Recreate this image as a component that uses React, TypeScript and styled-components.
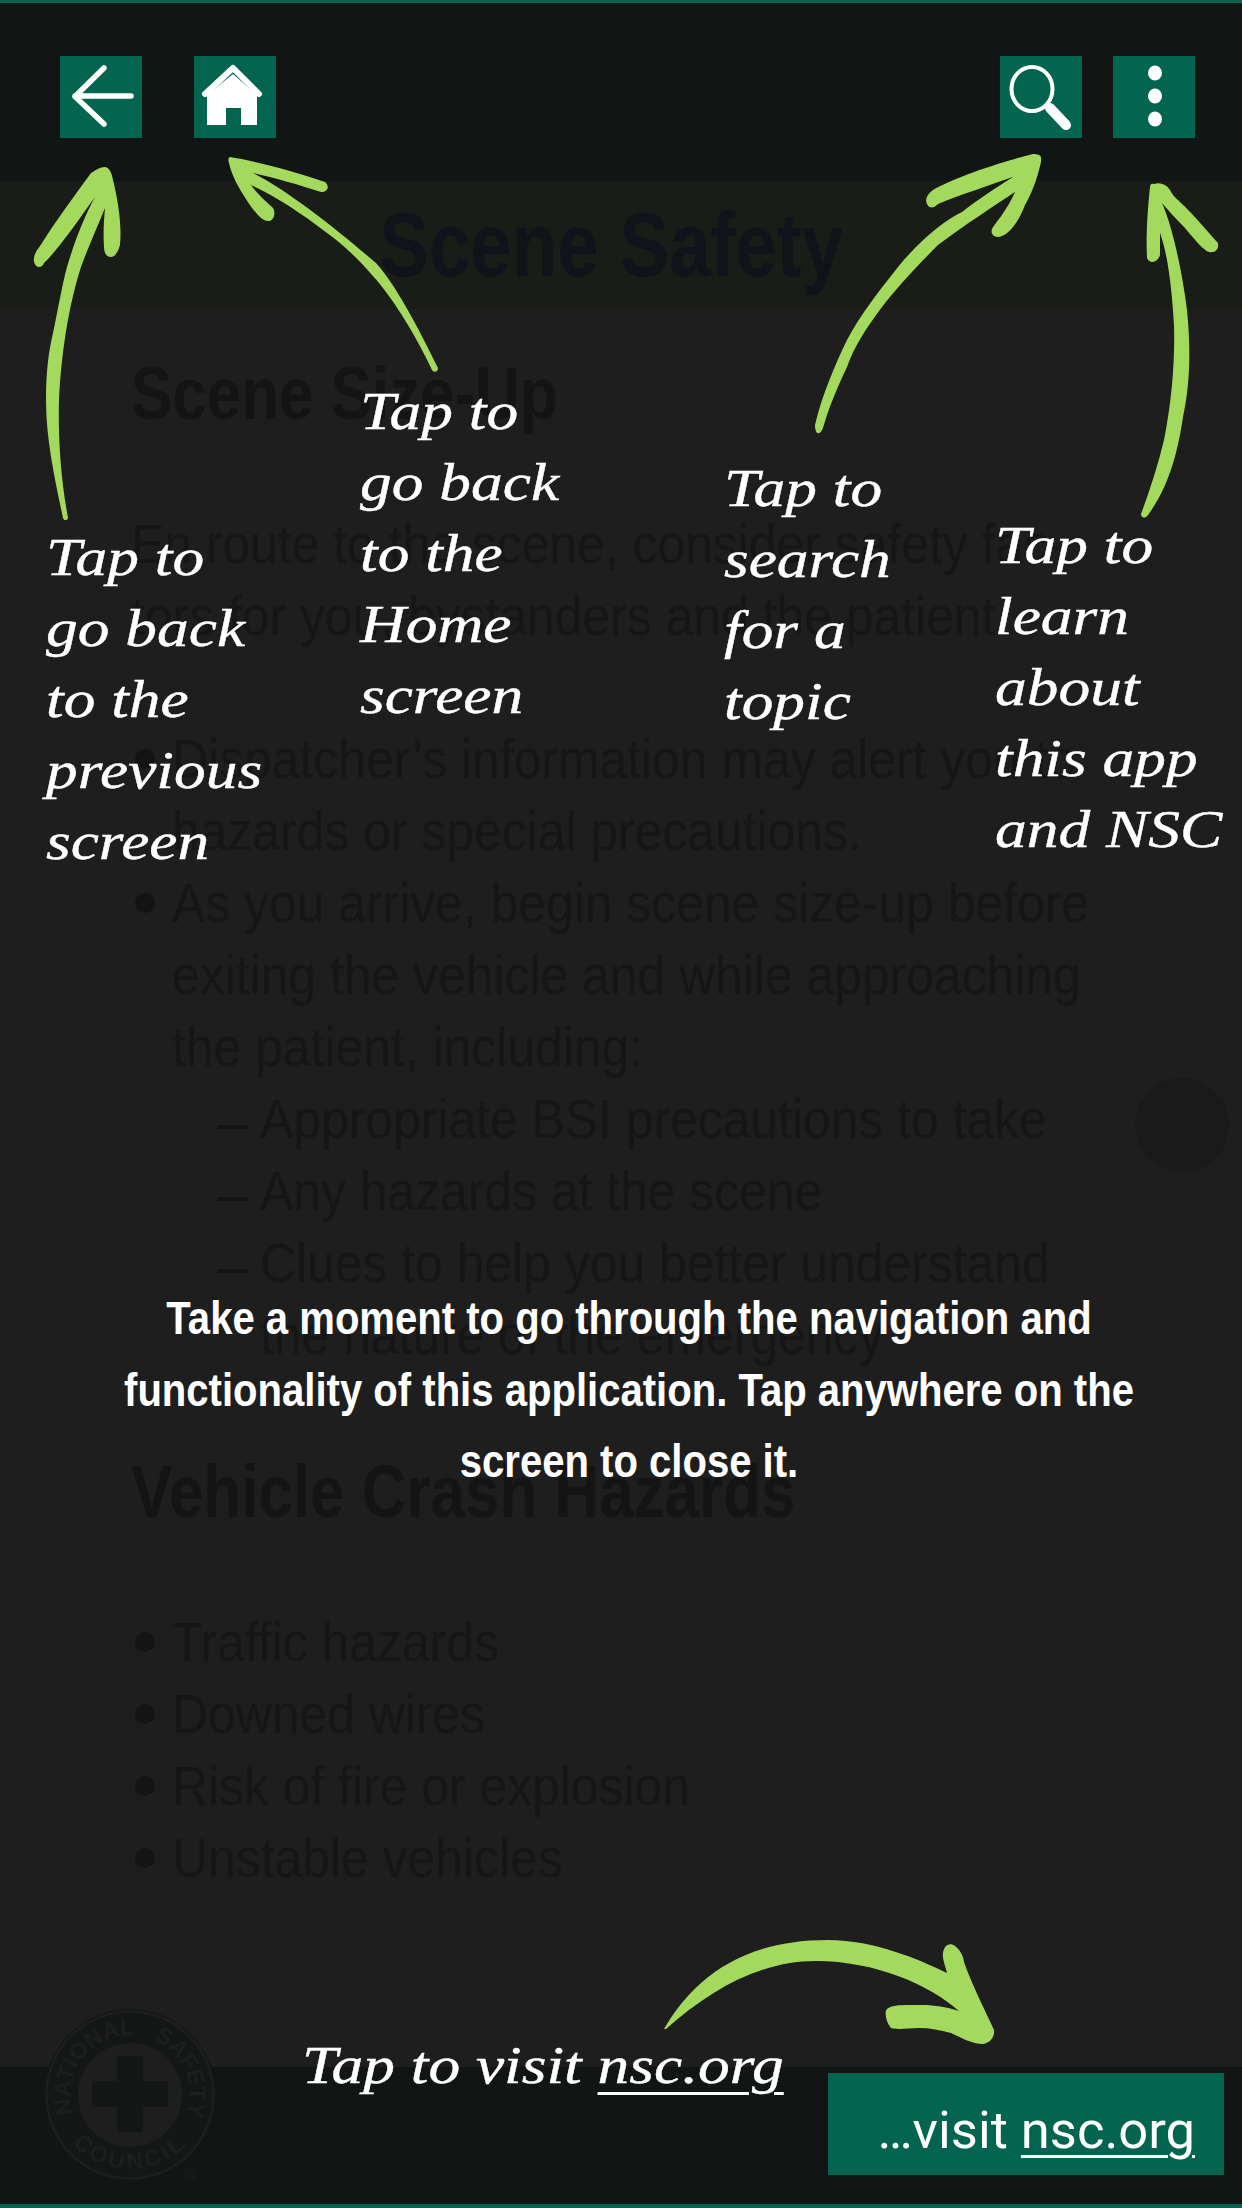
import React from 'react';
import styled, { createGlobalStyle } from 'styled-components';

const Global = createGlobalStyle`
  *, *::before, *::after { box-sizing: border-box; }
  html, body { margin: 0; padding: 0; background: #1e1e1e; }
  body { font-family: "Liberation Sans", Arial, sans-serif; }
`;

const Page = styled.div`
  position: relative;
  width: 1242px;
  height: 2208px;
  overflow: hidden;
  display: flex;
  flex-direction: column;
  background: #1e1e1e;
`;

const TopBar = styled.header`
  height: 181px;
  border-top: 3px solid #03654f;
  background: #111514;
  display: flex;
  justify-content: space-between;
  align-items: flex-start;
  padding: 53px 47px 0 60px;
`;

const NavGroup = styled.div`
  display: flex;
  gap: ${p => p.$gap}px;
`;

const IconButton = styled.button`
  width: 82px;
  height: 82px;
  padding: 0;
  border: 0;
  background: #03654f;
  display: block;
`;

const TitleBand = styled.div`
  height: 128px;
  background: #1a1c17;
  display: flex;
  justify-content: center;
  align-items: center;
  padding-right: 20px;
`;

const Title = styled.h1`
  margin: 0;
  color: #11131b;
  font: 700 90px/128px "Liberation Sans", Arial, sans-serif;
  white-space: nowrap;
  transform: scaleX(0.828);
`;

const Content = styled.main`
  flex: 1;
  padding: 40px 0 0 131px;
  color: #161616;
`;

const Heading = styled.h2`
  margin: ${p => p.$mt || 0}px 0 0;
  color: #141414;
  font: 700 74px/90px "Liberation Sans", Arial, sans-serif;
  white-space: nowrap;
  transform: scaleX(0.837);
  transform-origin: left;
`;

const Para = styled.p`
  margin: ${p => p.$mt || 0}px 0 0;
`;

const Line = styled.div`
  font-size: 56px;
  line-height: 72px;
  height: 72px;
  white-space: nowrap;
  transform: scaleX(0.89);
  transform-origin: left;
`;

const List = styled.ul`
  margin: ${p => p.$mt || 0}px 0 0;
  padding: 0;
  list-style: none;
`;

const Item = styled.li`
  position: relative;
  padding-left: 41px;
  &::before {
    content: '';
    position: absolute;
    left: 4px;
    top: 26px;
    width: 20px;
    height: 20px;
    border-radius: 50%;
    background: #141414;
  }
`;

const SubItem = styled.div`
  position: relative;
  padding-left: 88px;
  &::before {
    content: '';
    position: absolute;
    left: 46px;
    top: 42px;
    width: 30px;
    height: 4px;
    background: #141414;
  }
`;

const Footer = styled.footer`
  height: 141px;
  background: #111514;
  border-bottom: 4px solid #03654f;
  display: flex;
  justify-content: flex-end;
  align-items: flex-start;
  padding: 6px 18px 0 0;
`;

const VisitButton = styled.a`
  width: 396px;
  height: 102px;
  background: #03654f;
  color: #fff;
  font: 400 52.5px/114px Roboto, sans-serif;
  display: flex;
  justify-content: flex-end;
  padding-right: 29px;
  white-space: pre;
  u { text-underline-offset: 7px; text-decoration-thickness: 3px; }
`;

const FloatCircle = styled.div`
  position: absolute;
  left: 1135px;
  top: 1078px;
  width: 94px;
  height: 94px;
  border-radius: 50%;
  background: #1a1a1a;
`;

const Seal = styled.svg`
  position: absolute;
  left: 40px;
  top: 2005px;
`;

const SealText = styled.text`
  font-family: "Liberation Sans", Arial, sans-serif;
  font-weight: 700;
  font-size: 23px;
  fill: #1e1e1e;
`;

const Arrows = styled.svg`
  position: absolute;
  left: 0;
  top: 0;
  pointer-events: none;
`;

const Hand = styled.div`
  position: absolute;
  left: ${p => p.$x}px;
  top: ${p => p.$y}px;
  color: #fff;
  font: italic 400 52px/71px "Liberation Serif", "Times New Roman", serif;
  white-space: nowrap;
  transform: scaleX(1.22);
  transform-origin: left;
  -webkit-text-stroke: 0.4px #fff;
  u { text-underline-offset: 9px; text-decoration-thickness: 3px; }
`;

const Message = styled.div`
  position: absolute;
  left: 0;
  right: 0;
  top: 1283px;
  padding-left: 16px;
  text-align: center;
  color: #fff;
`;

const MessageLine = styled.div`
  font: 700 46px/71.5px "Liberation Sans", Arial, sans-serif;
  white-space: nowrap;
  transform: scaleX(0.871);
`;

const hand = (lines: string[]) => lines.map(l => <div key={l}>{l}</div>);

const ARROW = '#a3d95c';

export default function App() {
  return (
    <Page>
      <Global />
      <TopBar>
        <NavGroup $gap={52}>
          <IconButton aria-label="Back">
            <svg width="82" height="82" viewBox="0 0 82 82">
              <path d="M44 12 L15 40.5 L44 68 M15 40 H71" fill="none" stroke="#fff" strokeWidth="5.5" strokeLinecap="round" strokeLinejoin="round" />
            </svg>
          </IconButton>
          <IconButton aria-label="Home">
            <svg width="82" height="82" viewBox="0 0 82 82">
              <path d="M11 38 L39 12 L65 38" fill="none" stroke="#fff" strokeWidth="6" strokeLinecap="round" strokeLinejoin="round" />
              <path d="M13 39 L39 18 L63 39 V69 H47 V52 H32 V69 H13 Z" fill="#fff" />
            </svg>
          </IconButton>
        </NavGroup>
        <NavGroup $gap={31}>
          <IconButton aria-label="Search">
            <svg width="82" height="82" viewBox="0 0 82 82">
              <ellipse cx="32" cy="33" rx="20.5" ry="22" fill="none" stroke="#fff" strokeWidth="4" />
              <path d="M50 52 L66 69" stroke="#fff" strokeWidth="10" strokeLinecap="round" />
            </svg>
          </IconButton>
          <IconButton aria-label="Menu">
            <svg width="82" height="82" viewBox="0 0 82 82">
              <ellipse cx="42" cy="17" rx="7" ry="7.5" fill="#fff" />
              <ellipse cx="42" cy="40" rx="7" ry="7.5" fill="#fff" />
              <ellipse cx="42" cy="63" rx="7" ry="7.5" fill="#fff" />
            </svg>
          </IconButton>
        </NavGroup>
      </TopBar>

      <TitleBand>
        <Title>Scene Safety</Title>
      </TitleBand>

      <Content>
        <Heading>Scene Size-Up</Heading>
        <Para $mt={69}>
          <Line>En route to the scene, consider safety fac-</Line>
          <Line>tors for you, bystanders and the patient.</Line>
        </Para>
        <List $mt={71}>
          <Item>
            <Line>Dispatcher’s information may alert you to</Line>
            <Line>hazards or special precautions.</Line>
          </Item>
          <Item>
            <Line>As you arrive, begin scene size-up before</Line>
            <Line>exiting the vehicle and while approaching</Line>
            <Line>the patient, including:</Line>
            <SubItem><Line>Appropriate BSI precautions to take</Line></SubItem>
            <SubItem><Line>Any hazards at the scene</Line></SubItem>
            <SubItem>
              <Line>Clues to help you better understand</Line>
              <Line>the nature of the emergency</Line>
            </SubItem>
          </Item>
        </List>
        <Heading $mt={76}>Vehicle Crash Hazards</Heading>
        <List $mt={69}>
          <Item><Line>Traffic hazards</Line></Item>
          <Item><Line>Downed wires</Line></Item>
          <Item><Line>Risk of fire or explosion</Line></Item>
          <Item><Line>Unstable vehicles</Line></Item>
        </List>
      </Content>

      <Footer>
        <VisitButton>…visit <u>nsc.org</u></VisitButton>
      </Footer>

      <FloatCircle />

      <Seal width="180" height="180" viewBox="0 0 180 180">
        <defs>
          <path id="sealNational" d="M 32.5 107 A 60 60 0 0 1 93 30" fill="none" />
          <path id="sealSafety" d="M 117 36 A 60 60 0 0 1 147 107" fill="none" />
          <path id="sealCouncil" d="M 30 136 A 78 78 0 0 0 150 136" fill="none" />
        </defs>
        <circle cx="90" cy="90" r="86" fill="#131716" />
        <circle cx="90" cy="90" r="83.5" fill="none" stroke="#1e1e1e" strokeWidth="2.5" />
        <circle cx="90" cy="90" r="52" fill="#1e1e1e" />
        <path d="M77 51 H103 V76 H128 V102 H103 V127 H77 V102 H52 V76 H77 Z" fill="#131716" />
        <SealText><textPath href="#sealNational" startOffset="50%" textAnchor="middle">NATIONAL</textPath></SealText>
        <SealText><textPath href="#sealSafety" startOffset="50%" textAnchor="middle">SAFETY</textPath></SealText>
        <SealText letterSpacing="3.5"><textPath href="#sealCouncil" startOffset="50%" textAnchor="middle">COUNCIL</textPath></SealText>
        <circle cx="150" cy="169" r="5" fill="none" stroke="#1e1e1e" strokeWidth="1.2" />
        <text x="150" y="172" textAnchor="middle" fontSize="7" fontFamily="'Liberation Sans', sans-serif" fill="#1e1e1e">R</text>
      </Seal>

      <Arrows width="1242" height="2208" viewBox="0 0 1242 2208">
        <g fill={ARROW}>
          <path d="M105 167 C110 168 112 174 113 180 C118 200 122 225 120 245 C118 252 115 257 111 257 C106 257 104 252 104 247 C103 232 104 220 105 208 C97 228 87 250 81 267 C72 295 62 340 59 400 C58 440 61 480 68 518 C67 521 64 521 63 518 C55 480 46 440 46 400 C46 370 49 350 53 333 C58 310 62 285 67 267 C75 240 85 215 95 197 C80 218 58 250 44 263 C42 268 36 269 34 262 C33 255 37 250 40 246 C55 222 75 195 91 173 C96 170 100 167 105 167 Z" />
          <path d="M230 157 C250 160 290 170 325 182 C330 186 328 192 321 192 C300 185 275 178 253 173 C290 192 335 228 376 263 C400 290 424 340 438 368 C438 372 434 373 432 370 C418 340 395 300 372 275 C355 255 338 241 327 233 C300 212 275 196 251 185 C258 195 268 203 273 208 C276 213 274 221 268 221 C262 221 258 215 252 208 C243 195 232 178 229 163 C228 160 228 158 230 157 Z" />
          <path d="M1039 155 C1042 156 1041 160 1041 162 C1037 180 1031 195 1025 205 C1020 218 1012 232 1002 236 C995 239 990 234 992 229 C996 222 1006 212 1015 192 C995 205 965 225 938 245 C915 268 895 290 882 307 C865 330 855 345 847 367 C836 390 828 410 823 428 C820 436 815 435 815 425 C822 395 835 365 847 340 C860 315 880 290 898 267 C920 240 945 220 962 212 C980 198 1000 185 1013 177 C990 185 960 195 938 204 C932 210 927 208 926 200 C927 195 930 192 933 190 C950 180 990 165 1033 154 C1035 154 1037 154 1039 155 Z" />
          <path d="M1150 187 C1150 184 1152 183 1154 184 C1160 182 1166 184 1170 190 C1173 196 1177 199 1180 202 C1195 216 1208 232 1218 243 C1219 250 1215 253 1209 252 C1203 250 1195 240 1185 228 C1175 218 1168 210 1162 203 C1172 225 1182 270 1187 310 C1191 350 1190 385 1183 417 C1178 450 1170 485 1148 515 C1145 519 1141 518 1141 514 C1150 490 1158 465 1164 440 C1172 400 1175 360 1174 325 C1172 290 1168 255 1160 233 L1160 255 C1158 262 1150 265 1147 258 C1146 240 1147 215 1150 187 Z" />
          <path d="M664 2029 C690 1985 735 1940 828 1940 C875 1940 920 1960 947 1973 C945 1965 942 1958 943 1953 C944 1945 950 1942 955 1946 C960 1950 963 1955 964 1962 C972 1985 985 2010 994 2030 C995 2037 990 2043 983 2044 C972 2044 962 2038 951 2033 C940 2030 930 2028 919 2028 C908 2028 898 2030 891 2028 C886 2022 884 2012 887 2009 C892 2004 905 2005 927 2005 C940 2006 950 2008 959 2011 C930 1985 875 1961 816 1961 C760 1961 710 1990 666 2029 Z" />
        </g>
      </Arrows>

      <Hand $x={46} $y={522}>{hand(['Tap to', 'go back', 'to the', 'previous', 'screen'])}</Hand>
      <Hand $x={360} $y={376}>{hand(['Tap to', 'go back', 'to the', 'Home', 'screen'])}</Hand>
      <Hand $x={724} $y={453}>{hand(['Tap to', 'search', 'for a', 'topic'])}</Hand>
      <Hand $x={995} $y={510}>{hand(['Tap to', 'learn', 'about', 'this app', 'and NSC'])}</Hand>
      <Hand $x={302} $y={2030}>Tap to visit <u>nsc.org</u></Hand>

      <Message>
        <MessageLine>Take a moment to go through the navigation and</MessageLine>
        <MessageLine>functionality of this application. Tap anywhere on the</MessageLine>
        <MessageLine>screen to close it.</MessageLine>
      </Message>
    </Page>
  );
}
